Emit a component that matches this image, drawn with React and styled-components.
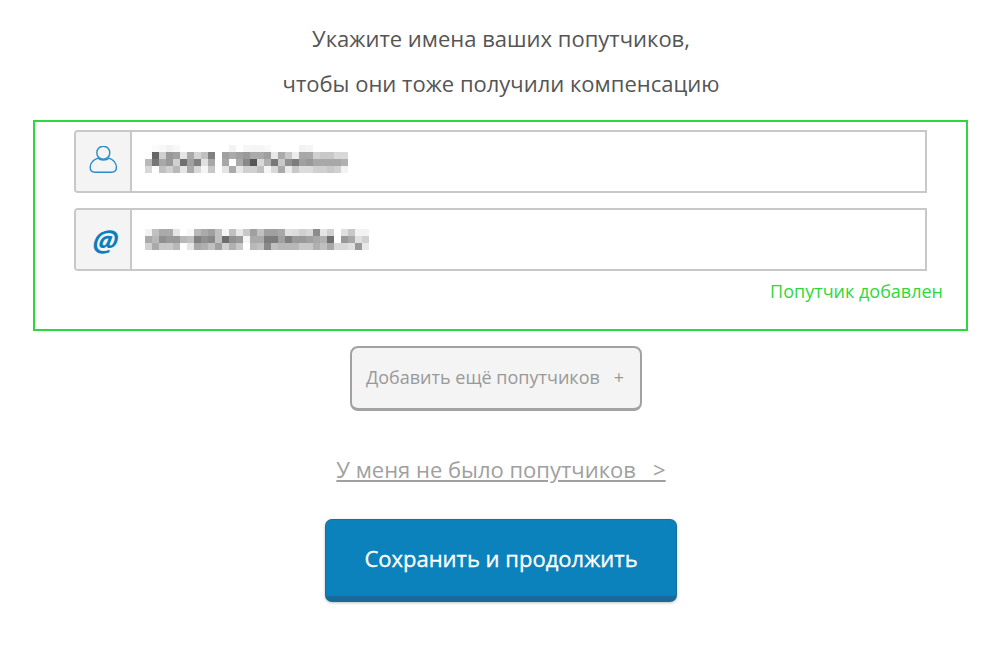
import React from 'react';
import styled, { createGlobalStyle } from 'styled-components';

const Global = createGlobalStyle`
  html, body { margin: 0; padding: 0; background: #fff; }
  body { font-family: "Open Sans", "Noto Sans", sans-serif; }
`;

const Page = styled.main`
  width: 1000px;
  height: 650px;
  overflow: hidden;
  box-sizing: border-box;
  padding-top: 16px;
  display: flex;
  flex-direction: column;
  align-items: center;
`;

const Intro = styled.p`
  margin: 0 0 0 2px;
  font-size: 22px;
  line-height: 45px;
  color: #555;
  text-align: center;
`;

const GreenBox = styled.section`
  box-sizing: border-box;
  width: 935px;
  height: 211px;
  margin-top: 14px;
  margin-left: 1px;
  border: 2px solid #2ed83c;
  padding: 8px 23px 0 39px;
  display: flex;
  flex-direction: column;
`;

const Field = styled.div`
  box-sizing: border-box;
  width: 853px;
  height: 63px;
  margin-bottom: 15px;
  border: 2px solid #c8c8c8;
  border-radius: 4px 0 0 4px;
  display: flex;
  align-items: stretch;
  background: #fff;
`;

const IconCell = styled.div`
  box-sizing: content-box;
  width: 54px;
  flex: none;
  border-right: 2px solid #c8c8c8;
  border-radius: 2px 0 0 2px;
  background: #f4f4f4;
  display: flex;
  align-items: center;
  justify-content: center;
`;

const AtSign = styled.span`
  font-size: 29px;
  line-height: 1;
  font-weight: 700;
  font-style: italic;
  color: #0c7fba;
  margin-left: 4px;
  transform: skewX(-8deg);
`;

const Blur = styled.svg`
  display: block;
  margin-left: 13px;
  margin-top: ${p => p.$top}px;
  flex: none;
`;

const Status = styled.div`
  margin-top: -6px;
  text-align: right;
  font-size: 18px;
  line-height: 22px;
  color: #2ed83c;
`;

const AddButton = styled.button`
  box-sizing: border-box;
  width: 292px;
  height: 65px;
  margin-top: 15px;
  margin-right: 8px;
  border: 2px solid #a2a2a2;
  border-bottom-width: 3px;
  border-radius: 8px;
  background: #f4f4f4;
  color: #999;
  font: 400 18px "Open Sans", sans-serif;
  display: flex;
  align-items: center;
  justify-content: center;
  gap: 14px;
  padding: 0 2px 2px 0;
`;

const SkipLink = styled.a`
  margin-top: 43px;
  margin-left: 2px;
  font-size: 22px;
  line-height: 30px;
  color: #a0a0a0;
  text-decoration: underline;
  white-space: pre;
`;

const SaveButton = styled.button`
  box-sizing: border-box;
  width: 352px;
  height: 83px;
  margin-top: 35px;
  margin-left: 2px;
  border: 1px solid #1a6f9f;
  border-bottom: 6px solid #1a6a99;
  border-radius: 7px;
  background: #0c82bc;
  box-shadow: 0 1px 3px rgba(0, 0, 0, 0.25);
  color: #fff;
  font: 400 22px "Open Sans", sans-serif;
  -webkit-text-stroke: 0.3px #fff;
  padding: 0;
`;

const NAME = [
  'ff fb f8 f2 f8 ff ff ff ff ff ff ff f3 ff f6 f5 f5 f9 ff ff ff ff f2 f5 ff ff ff ff ff',
  'fc 66 d0 99 a0 e5 a8 d4 c0 80 ff a0 aa a0 99 aa aa a0 e8 aa c8 ec a8 a8 d0 c8 c8 d8 d8',
  'b8 77 a8 99 d0 70 a0 80 e0 a8 ff a8 ff aa 88 55 d8 b0 78 c8 90 7c a0 99 a8 a8 a8 a8 b0',
  'd8 ff c0 d0 b8 e5 aa d8 f5 c8 ff e5 aa e8 d0 d0 c0 f5 d8 aa ec c8 dc dc d0 d0 c8 d0 f2',
];

const EMAIL = [
  'f2 c0 aa aa e5 ff f8 b8 aa a0 c0 f5 c0 e8 c8 a0 c0 a0 a0 a8 e0 dc d0 d8 8c e5 d0 ff e0 c8 f2 f2',
  'aa b8 90 99 99 b8 c0 80 90 88 c0 6c 90 99 f5 aa aa 7c 7c a0 80 99 99 a0 a8 b0 70 ff 99 a8 e0 d0',
  'd0 aa c8 c8 b8 ff e5 a8 b0 c0 a0 d0 b0 c8 ff b8 c0 88 c0 b8 b8 b8 c8 c8 b0 c0 a8 d8 d8 e0 99 e8',
];

const Mosaic = ({ rows, top }) => {
  const cells = rows.map(r => r.split(' '));
  const w = cells[0].length * 7;
  const h = cells.length * 7;
  return (
    <Blur $top={top} width={w} height={h} viewBox={`0 0 ${w} ${h}`} shapeRendering="crispEdges" aria-hidden="true">
      {cells.flatMap((row, y) =>
        row.map((g, x) => (
          <rect key={`${x}-${y}`} x={x * 7} y={y * 7} width="7" height="7" fill={`#${g}${g}${g}`} />
        ))
      )}
    </Blur>
  );
};

const UserIcon = () => (
  <svg width="30" height="31" viewBox="0 0 30 31" fill="none" stroke="#2a8cc6" strokeWidth="1.4">
    <circle cx="15.3" cy="6.7" r="6.5" />
    <path d="M10 12.2C5.5 13.7 2.2 17 2.2 21.5C2.2 24.5 4 26.2 7 26.2H23.6C26.6 26.2 28.4 24.5 28.4 21.5C28.4 17 25 13.7 21 12.2C18.5 14.5 12.5 14.5 10 12.2Z" />
  </svg>
);

export default function App() {
  return (
    <Page>
      <Global />
      <Intro>Укажите имена ваших попутчиков,</Intro>
      <Intro>чтобы они тоже получили компенсацию</Intro>
      <GreenBox>
        <Field>
          <IconCell><UserIcon /></IconCell>
          <Mosaic rows={NAME} top={13} />
        </Field>
        <Field>
          <IconCell><AtSign>@</AtSign></IconCell>
          <Mosaic rows={EMAIL} top={19} />
        </Field>
        <Status>Попутчик добавлен</Status>
      </GreenBox>
      <AddButton>
        <span>Добавить ещё попутчиков</span>
        <span>+</span>
      </AddButton>
      <SkipLink href="#">{'У меня не было попутчиков   >'}</SkipLink>
      <SaveButton>Сохранить и продолжить</SaveButton>
    </Page>
  );
}
